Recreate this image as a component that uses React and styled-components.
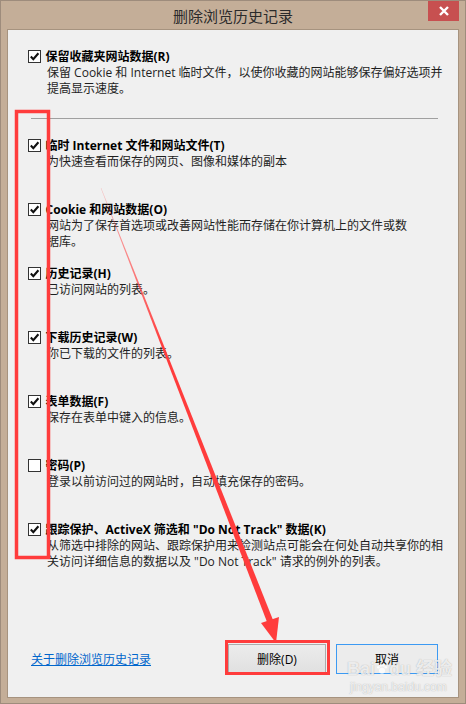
import React from 'react';
import styled, { createGlobalStyle } from 'styled-components';

const GlobalStyle = createGlobalStyle`
  html, body {
    margin: 0;
    padding: 0;
    background: #c4ae98;
  }
  body {
    font-family: "Open Sans", "Noto Sans CJK SC", sans-serif;
  }
`;

const items = [
    {
        label: '临时 Internet 文件和网站文件(T)',
        desc: ['为快速查看而保存的网页、图像和媒体的副本'],
        checked: true,
    },
    {
        label: 'Cookie 和网站数据(O)',
        desc: ['网站为了保存首选项或改善网站性能而存储在你计算机上的文件或数', '据库。'],
        checked: true,
    },
    { label: '历史记录(H)', desc: ['已访问网站的列表。'], checked: true },
    { label: '下载历史记录(W)', desc: ['你已下载的文件的列表。'], checked: true },
    { label: '表单数据(F)', desc: ['保存在表单中键入的信息。'], checked: true },
    { label: '密码(P)', desc: ['登录以前访问过的网站时，自动填充保存的密码。'], checked: false },
    {
        label: '跟踪保护、ActiveX 筛选和 "Do Not Track" 数据(K)',
        desc: ['从筛选中排除的网站、跟踪保护用来检测站点可能会在何处自动共享你的相', '关访问详细信息的数据以及 "Do Not Track" 请求的例外的列表。'],
        checked: true,
    },
];

const CheckBox = ({ checked }) => (
    <Box>
        {checked && (
            <svg width="11" height="11" viewBox="0 0 11 11">
                <path d="M1.8 5.6 L4.3 8.2 L9.4 2.2" fill="none" stroke="#111" strokeWidth="2.1" />
            </svg>
        )}
    </Box>
);

const Option = ({ label, desc, checked, fixed }) => (
    <Item $fixed={fixed}>
        <LabelRow>
            <CheckBox checked={checked} />
            <Label>{label}</Label>
        </LabelRow>
        {desc.map((line, i) => (
            <Desc key={i}>{line}</Desc>
        ))}
    </Item>
);

const Annotations = () => (
    <Overlay width="466" height="704" viewBox="0 0 466 704">
        <defs>
            <linearGradient id="fade" x1="0" y1="190" x2="0" y2="640" gradientUnits="userSpaceOnUse">
                <stop offset="0" stopColor="#ff4a4a" stopOpacity="0.35" />
                <stop offset="0.35" stopColor="#ff3c3c" stopOpacity="1" />
                <stop offset="1" stopColor="#ff3c3c" stopOpacity="1" />
            </linearGradient>
        </defs>
        <rect x="16.5" y="111.5" width="32" height="446" fill="none" stroke="#ff3c3c" strokeWidth="3.5" />
        <rect x="226.5" y="641.5" width="102" height="32" fill="none" stroke="#ff3c3c" strokeWidth="3" />
        <polygon points="100.8,188 101.2,188 273,620 267,622" fill="url(#fade)" />
        <polygon points="276,643 261,623 279,617" fill="#ff3c3c" />
    </Overlay>
);

const App = () => {
    return (
        <>
            <GlobalStyle />
            <Window>
                <TitleBar>
                    <span />
                    <Title>删除浏览历史记录</Title>
                    <CloseButton>
                        <svg width="12" height="12" viewBox="0 0 12 12">
                            <path d="M2 2 L10 10 M10 2 L2 10" stroke="#fff" strokeWidth="2.4" />
                        </svg>
                    </CloseButton>
                </TitleBar>
                <Panel>
                    <Option
                        label="保留收藏夹网站数据(R)"
                        desc={['保留 Cookie 和 Internet 临时文件，以使你收藏的网站能够保存偏好选项并', '提高显示速度。']}
                        checked
                    />
                    <Separator />
                    {items.map((it) => (
                        <Option key={it.label} {...it} fixed />
                    ))}
                    <Footer>
                        <HelpLink href="#">关于删除浏览历史记录</HelpLink>
                        <Button $w={98}>删除(D)</Button>
                        <Button $w={102} $focus>取消</Button>
                    </Footer>
                </Panel>
                <Watermark>
                    <Brand>
                        Bai<Paw viewBox="0 0 20 20"><circle cx="10" cy="13" r="5" /><circle cx="4" cy="7" r="2.2" /><circle cx="8" cy="4" r="2.2" /><circle cx="12.5" cy="4" r="2.2" /><circle cx="16.3" cy="7" r="2.2" /></Paw>du 经验
                    </Brand>
                    <Site>jingyan.baidu.com</Site>
                </Watermark>
                <Annotations />
            </Window>
        </>
    );
};

export default App;

const Window = styled.div`
    position: relative;
    width: 466px;
    height: 704px;
    box-sizing: border-box;
    background: #c4ae98;
    border: 1px solid #9e8c7c;
    display: flex;
    flex-direction: column;
    overflow: hidden;
`;

const TitleBar = styled.div`
    height: 28px;
    display: grid;
    grid-template-columns: 1fr auto 1fr;
    align-items: start;
`;

const Title = styled.div`
    padding-top: 5px;
    font-family: "Noto Sans CJK SC", sans-serif;
    font-size: 15px;
    line-height: 20px;
    color: #2b2b2b;
`;

const CloseButton = styled.div`
    justify-self: end;
    margin-right: 6px;
    margin-top: -1px;
    width: 31px;
    height: 21px;
    background: #c75050;
    display: flex;
    align-items: center;
    justify-content: center;
`;

const Panel = styled.div`
    flex: 1;
    margin: 0 6px 5px 6px;
    border: 1px solid #a6937f;
    background: #f0f0f0;
    padding: 17px 19px 23px 19px;
    display: flex;
    flex-direction: column;
`;

const Item = styled.div`
    display: flex;
    flex-direction: column;
    height: ${(p) => (p.$fixed ? '64px' : 'auto')};
    flex-shrink: 0;
`;

const LabelRow = styled.div`
    display: flex;
    align-items: center;
    gap: 3px;
    height: 18px;
`;

const Box = styled.span`
    width: 11px;
    height: 11px;
    border: 1px solid #333;
    background: #fff;
    display: flex;
    align-items: center;
    justify-content: center;
    flex-shrink: 0;
    margin-left: 0.5px;
`;

const Label = styled.span`
    font-size: 12px;
    font-weight: 700;
    color: #000;
    white-space: nowrap;
    margin-left: 2px;
`;

const Desc = styled.div`
    padding-left: 20px;
    font-size: 12px;
    line-height: 16px;
    color: #1e1e1e;
    white-space: nowrap;
    &:first-of-type {
        margin-top: 1px;
    }
`;

const Separator = styled.div`
    height: 1px;
    background: #a0a0a0;
    margin: 21px 1px 17px 4px;
    flex-shrink: 0;
`;

const Footer = styled.div`
    margin-top: auto;
    display: flex;
    align-items: center;
    gap: 10px;
    height: 31px;
`;

const HelpLink = styled.a`
    margin-left: 4px;
    margin-right: auto;
    font-size: 12px;
    color: #0066cc;
    text-decoration: underline;
`;

const Button = styled.div`
    box-sizing: border-box;
    width: ${(p) => p.$w}px;
    height: 30px;
    border: 1px solid ${(p) => (p.$focus ? '#3c9af3' : '#acacac')};
    background: ${(p) => (p.$focus ? '#ececec' : 'linear-gradient(#ececec, #e0e0e0)')};
    display: flex;
    align-items: center;
    justify-content: center;
    font-size: 12px;
    color: #000;
    margin-right: ${(p) => (p.$focus ? '1px' : '0')};
`;

const Watermark = styled.div`
    position: absolute;
    left: 346px;
    top: 657px;
    display: flex;
    flex-direction: column;
    align-items: flex-start;
    white-space: nowrap;
    color: rgba(255, 255, 255, 0.8);
    text-shadow: 0 0 1px rgba(90, 90, 90, 0.5);
    pointer-events: none;
`;

const Brand = styled.div`
    display: flex;
    align-items: center;
    font-family: "Liberation Sans", "Noto Sans CJK SC", sans-serif;
    font-size: 18px;
    font-weight: 700;
    line-height: 22px;
`;

const Paw = styled.svg`
    width: 12px;
    height: 12px;
    fill: rgba(255, 255, 255, 0.8);
    margin: 0 1px;
`;

const Site = styled.div`
    font-family: "Liberation Sans", sans-serif;
    font-size: 12px;
    line-height: 14px;
    margin-left: 3px;
`;

const Overlay = styled.svg`
    position: absolute;
    left: -1px;
    top: -1px;
    pointer-events: none;
`;
